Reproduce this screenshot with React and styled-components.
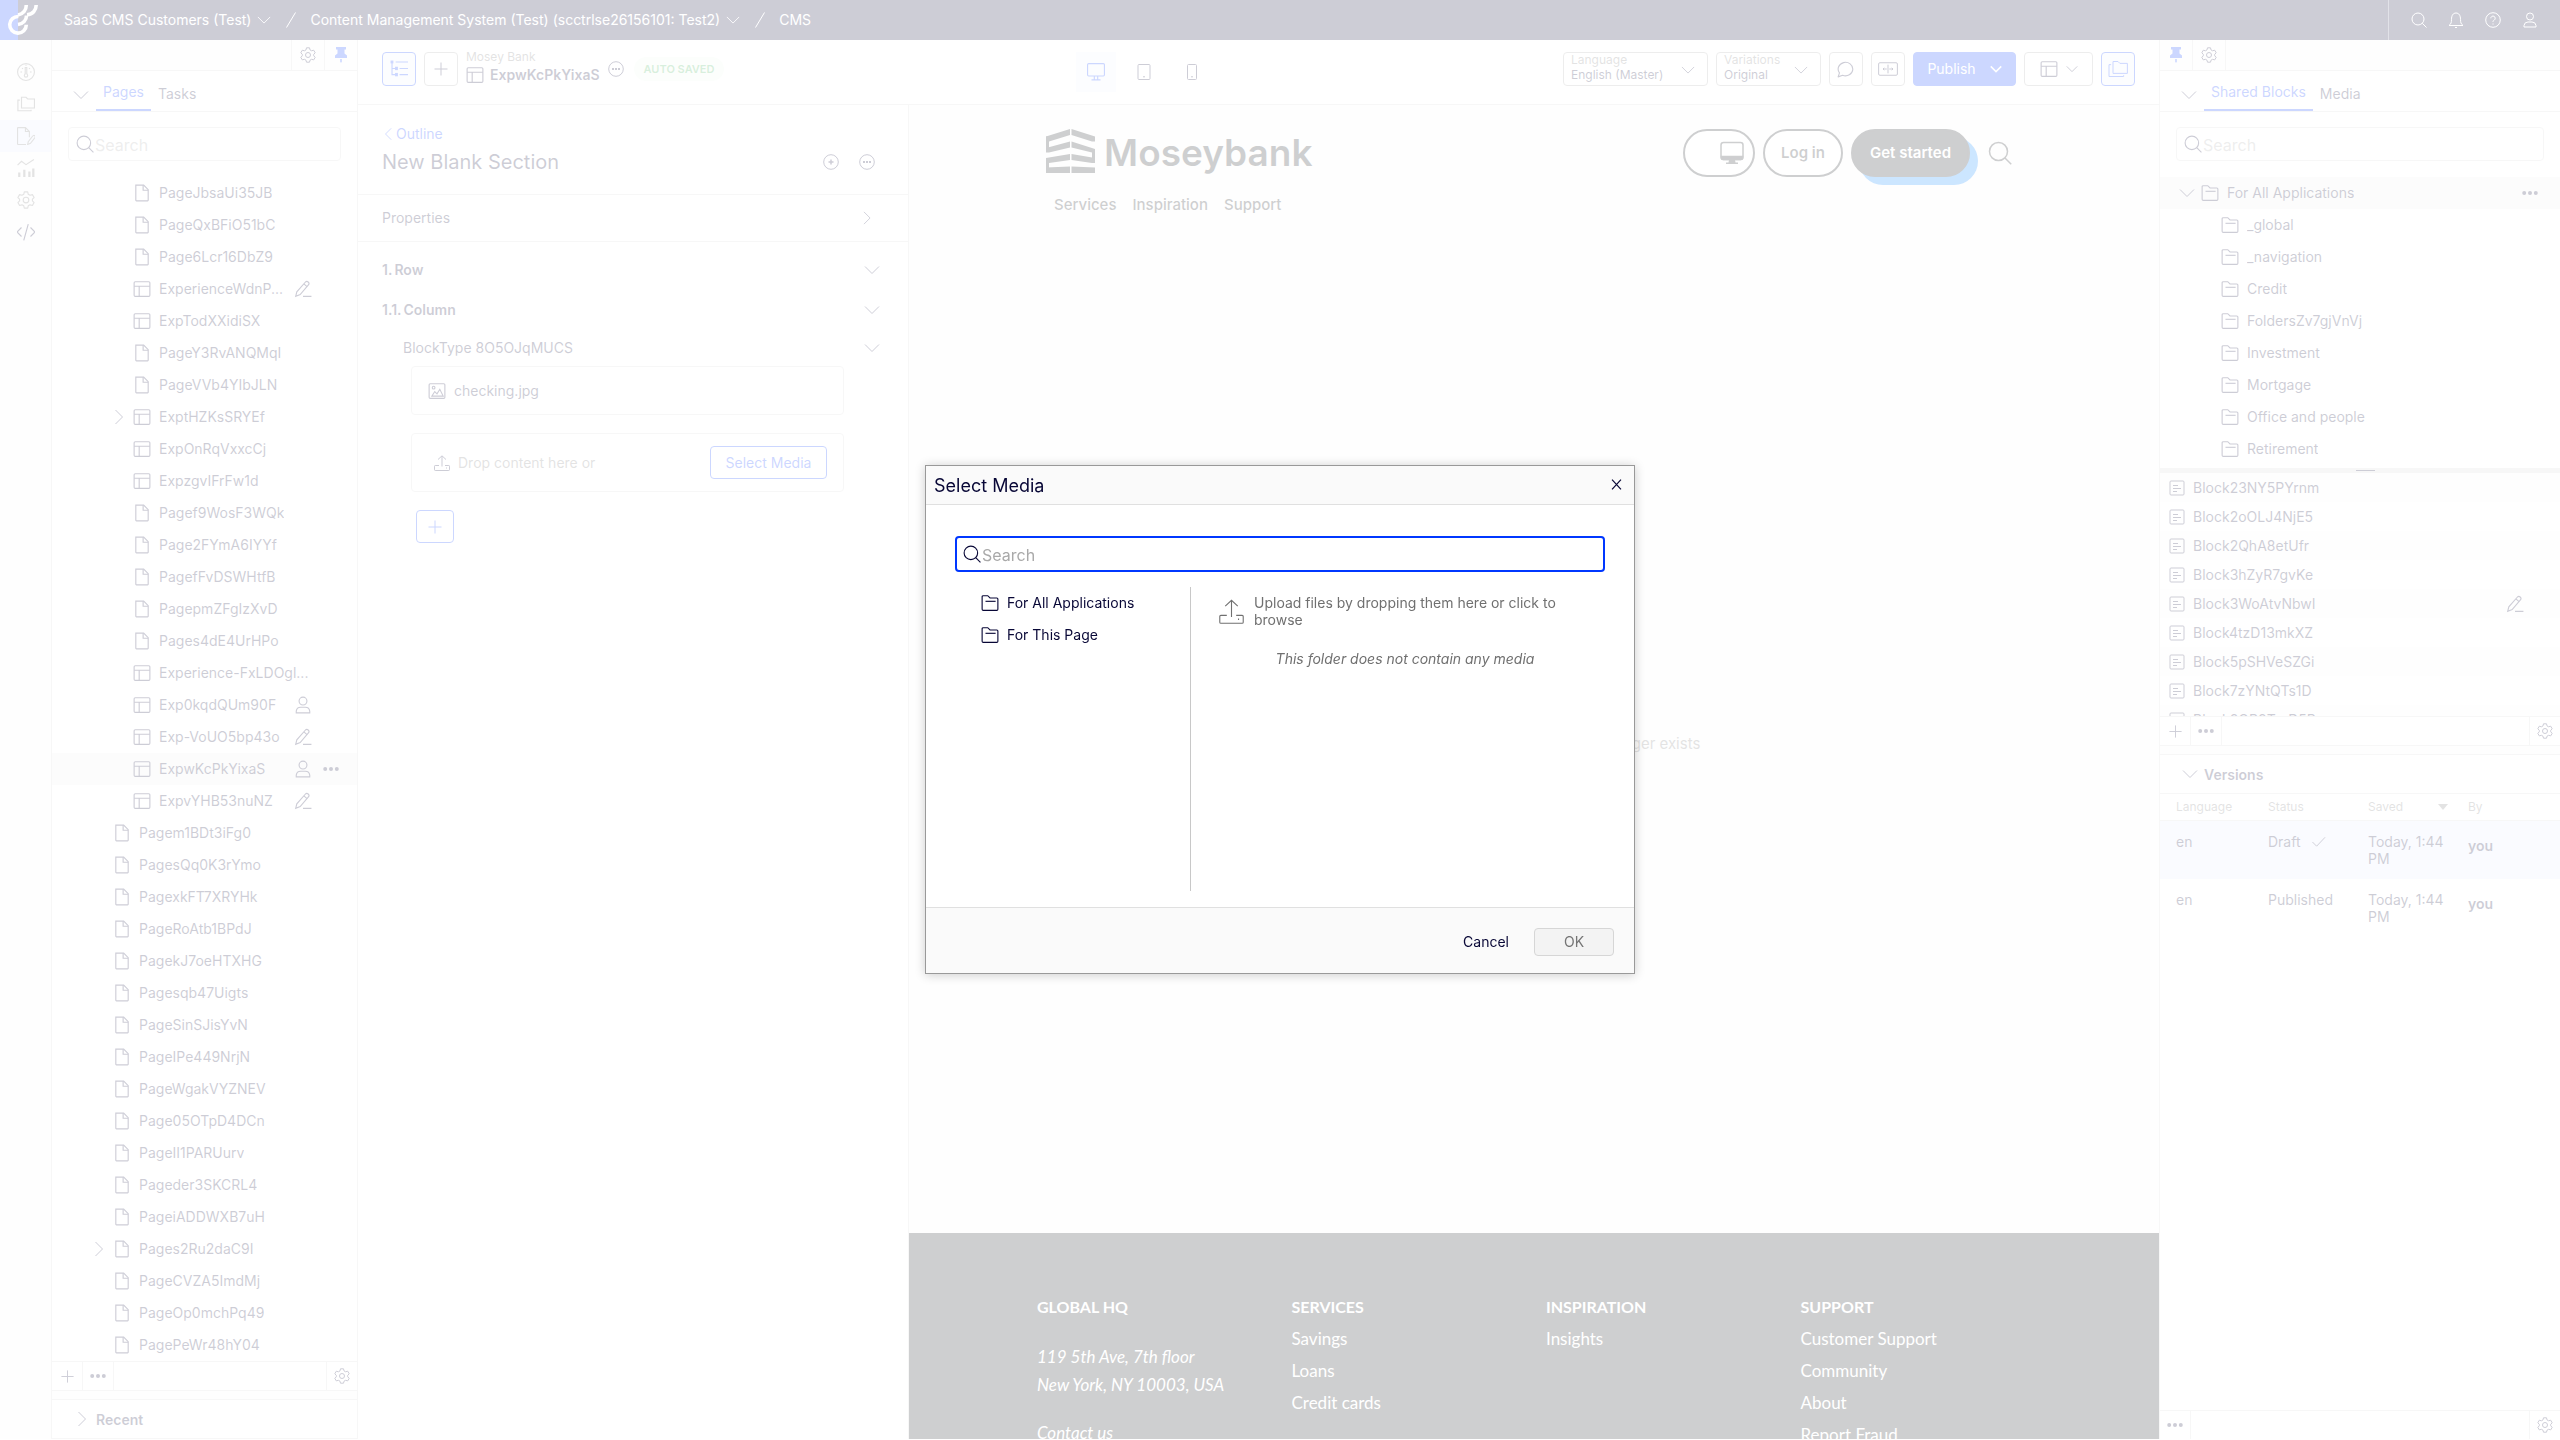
import React from 'react';
import styled, { createGlobalStyle, css } from 'styled-components';

const navy = '#080736';
const blue = '#0037ff';
const grey = '#757575';
const line = '#d6d6d6';
const edge = '#a6a6a6';
const ink = '#0b0f14';

const Global = createGlobalStyle`
  * { box-sizing: border-box; }
  html, body { margin: 0; height: 100%; overflow: hidden; }
  body { font-family: Inter, "Liberation Sans", sans-serif; font-size: 14px; line-height: 16px; color: ${navy}; background: #fff; }
  button, input, select { font: inherit; color: inherit; margin: 0; }
  button { padding: 0; border: 0; background: none; display: inline-flex; align-items: center; justify-content: center; }
  a { color: inherit; text-decoration: none; }
  ul { list-style: none; margin: 0; padding: 0; }
  h1, h2, h3, p { margin: 0; font-size: inherit; font-weight: inherit; }
`;

/* ---------- icons ---------- */
const shapes = {
  down: <path d="M1 4.500l7 7 7-7" />,
  right: <path d="M4.500 1l7 7-7 7" />,
  left: <path d="M10.500 1.500L4 8l6.500 6.500" />,
  page: <><path d="M2.500 1h7l4 4v9.500a.5.5 0 0 1-.5.5H3a.5.5 0 0 1-.5-.5z" /><path d="M9 1v4.500h4.500" /></>,
  layout: <><rect x="1" y="1.500" width="14" height="13" rx="1" /><path d="M1 5.500h14M5.500 5.500v9" /></>,
  folder: <><path d="M1 13.500v-11a1 1 0 0 1 1-1h4l2 2h6a1 1 0 0 1 1 1v9a1 1 0 0 1-1 1H2a1 1 0 0 1-1-1z" /><path d="M4 6.500h9" /></>,
  folders: <><path d="M4 11V2h4l1.500 1.500H15.500V11.500H4z" /><path d="M2.500 4.500H.8V14H12.500v-1" /></>,
  pencil: <><path d="M1.500 14.500l1-4 7.500-8.500a1.800 1.800 0 0 1 2.800 2.400L5.500 13z" /><path d="M8.800 3.500l2.800 2.400M8 14.500h7.500" /></>,
  person: <><circle cx="8" cy="4.500" r="3.500" /><path d="M2 15v-1.500a4 4 0 0 1 4-3.500h4a4 4 0 0 1 4 3.500V15z" /></>,
  dots: <g fill="currentColor" stroke="none"><circle cx="2.200" cy="8" r="2" /><circle cx="8" cy="8" r="2" /><circle cx="13.800" cy="8" r="2" /></g>,
  plus: <path d="M8 1.500v13M1.500 8h13" />,
  search: <><circle cx="7" cy="7" r="6" /><path d="M11.300 11.300L15.500 15.500" /></>,
  gear: <><path d="M6.500.8h3l.5 2.100 1.600.9 2.100-.6 1.500 2.600-1.500 1.500v1.500l1.500 1.500-1.500 2.600-2.100-.6-1.600.9-.5 2h-3l-.5-2-1.600-.9-2.100.6-1.500-2.600 1.500-1.500V7.300L.8 5.800l1.500-2.600 2.100.6L6 2.900z" strokeLinejoin="round" /><circle cx="8" cy="8" r="2.500" /></>,
  pin: <g fill="currentColor" stroke="none"><path d="M3 0h10v2.500h-1.500v4L14 8.500V11H2V8.500l2.500-2v-4H3z" /><path d="M7.200 12h1.600v2.500L8 16l-.8-1.500z" /></g>,
  gauge: <><circle cx="8" cy="8" r="7.500" /><circle cx="8" cy="11" r="1.500" /><path d="M7.300 9.500V4h1.400v5.500M3 8h1.500M11.500 8H13M4.500 4.500l.8.8M11.500 4.500l-.8.8M8 1.500v1" /></>,
  edit: <><path d="M8 15.500H1a.5.5 0 0 1-.5-.5V1A.5.5 0 0 1 1 .5h6.500L11 4v5" /><path d="M7.500.5V4H11M9.500 15.500l.5-2.500 4-5a1 1 0 0 1 2 1.500l-4 5z" /></>,
  chart: <><path d="M.5 5.500L4 2l4 3L15 .5" /><path d="M2 16v-4M6.500 16V9.500M11 16v-5M14.500 16V8.500" strokeWidth="2" /></>,
  code: <path d="M4 4L0 8l4 4M12 4l4 4-4 4M10 1L6 15.500" />,
  bell: <path d="M1 13.500h14c-2-1.500-2.500-3-2.500-6C12.500 3.500 11 1 8 1S3.500 3.500 3.500 7.500c0 3-.5 4.500-2.500 6zM7 15.500h2" />,
  help: <><circle cx="8" cy="8" r="7.300" /><path d="M5.800 6.300a2.200 2.200 0 1 1 3.400 1.800C8.300 8.600 8 9 8 10M8 11.500v1" /></>,
  tree: <><g fill="currentColor"><rect x="1" y="1" width="1.500" height="1.500" /><rect x="5" y="6.500" width="1.500" height="2" /><rect x="5" y="12" width="1.500" height="2" /></g><path d="M1.800 2v11H5M1.800 7.500H5M5 1.800h11M8.500 7.500H16M8.500 13H16" /></>,
  more: <><circle cx="8" cy="8" r="7.300" /><g fill="currentColor" stroke="none"><rect x="4" y="7" width="2" height="2" /><rect x="7" y="7" width="2" height="2" /><rect x="10" y="7" width="2" height="2" /></g></>,
  add: <><circle cx="8" cy="8" r="7.300" /><path d="M8 5.500v5M5.500 8h5" strokeWidth="1.500" /></>,
  desktop: <><rect x=".5" y=".5" width="15" height="11" rx="1" /><path d="M6.500 11.500v3M9.500 11.500v3M4 15h8" /></>,
  tablet: <><rect x="2" y=".5" width="12" height="15" rx="1" /><path d="M7 12.800h2" /></>,
  phone: <><rect x="3.500" y=".5" width="9" height="15" rx="1" /><path d="M7 12.800h2" /></>,
  comment: <path d="M1 15l1.200-3.500A6.500 6 0 1 1 5 13.600z" strokeLinejoin="round" />,
  compare: <><rect x=".5" y="3" width="15" height="10" rx="1" /><path d="M8 4.500v7M4 8h3M9 8h3M5 7L4 8l1 1M11 7l1 1-1 1" /></>,
  image: <><rect x="1" y="1.500" width="14" height="13" rx="1" /><circle cx="5" cy="5" r="1.200" /><path d="M3.500 12.500l2.500-4 2 2 2.500-4 3 6z" /></>,
  upload: <><path d="M8 11.500V1M4 4.500L8 .8l4 3.700" /><path d="M5 10.500H1.200a.7.7 0 0 0-.7.7v3.600c0 .4.3.7.7.7h13.600c.4 0 .7-.3.7-.7v-3.600a.7.7 0 0 0-.7-.7H11M12.500 12.500v1" /></>,
  block: <><rect x="1" y="1" width="14" height="14" rx="1" /><path d="M4 5.500h5M4 8.500h8M4 11.500h4" /></>,
  check: <path d="M1.500 8.500L6 13l9-9.500" />,
  close: <path d="M2.500 2l11 12M13.500 2l-11 12" />,
};

function Icon({ name, size = 16, weight = 1 }) {
  return (
    <svg width={size} height={size} viewBox="0 0 16 16" fill="none" stroke="currentColor" strokeWidth={weight} aria-hidden="true">
      {shapes[name]}
    </svg>
  );
}

/* ---------- shell ---------- */
const Shell = styled.div`
  height: 100vh; display: grid; grid-template-rows: 40px minmax(0, 1fr); padding-bottom: 1px;
`;
const TopBar = styled.header`
  display: flex; align-items: stretch; background: ${navy}; color: #fff;
`;
const Brand = styled.a`display: flex; width: 64px;`;
const Crumbs = styled.nav`
  display: flex; align-items: center; flex: 1;
`;
const Crumb = styled.button`gap: 6px; height: 40px;`;
const Slash = styled.span`
  display: flex; width: 39px; justify-content: center;
`;
const TopTools = styled.div`
  display: flex; align-items: center; gap: 21px; padding: 0 22px; border-left: 1px solid #6f6e8b;
`;
const Body = styled.div`
  display: grid; grid-template-columns: 52px 305px minmax(0, 1fr) 401px; min-height: 0;
`;
const Rail = styled.nav`
  padding-top: 16px; background: #f8f8f8; border-right: 1px solid ${line}; color: ${grey};
`;
const RailLink = styled.a`
  display: flex; height: 32px; align-items: center; justify-content: center;
  background: ${p => (p.$on ? '#e6ebff' : 'none')};
  color: ${p => (p.$dark ? navy : 'inherit')};
`;
const Side = styled.aside`
  display: flex; flex-direction: column; min-height: 0; background: #fff;
`;
const RightSide = styled(Side)`border-left: 1px solid ${line};`;
const PinBar = styled.div`
  display: flex; height: 31px; border-bottom: 1px solid ${line}; background: #fafafa;
  justify-content: ${p => (p.$end ? 'flex-end' : 'flex-start')};
`;
const PinButton = styled.button`
  width: 33px; color: ${p => (p.$on ? blue : navy)};
  border-${p => p.$side}: 1px solid ${line};
`;
const Tabs = styled.div`
  display: flex; height: 41px; padding-left: 14px; border-bottom: 1px solid ${line};
`;
const Fold = styled.button`width: 30px; padding-top: 8px;`;
const Tab = styled.button`
  height: 40px; padding: 6px 7px 0;
  ${p => p.$on && css`color: ${blue}; border-bottom: 2px solid ${blue}; padding-top: 4px;`}
`;
const SearchBox = styled.label`
  display: flex; align-items: center; height: 34px; padding: 0 7px; gap: 1px;
  border: 1px solid ${line}; border-radius: 4px; margin: 15px 16px 16px; background: #fff;
`;
const SearchInput = styled.input`
  flex: 1; min-width: 0; border: 0; outline: 0; padding: 2px 0 0; background: none; font-size: 16px; line-height: 20px;
  &::placeholder { color: #a9a9a9; opacity: 1; }
`;
const Tree = styled.ul`
  flex: ${p => (p.$grow ? '1 1 0' : 'none')}; min-height: 0; overflow: hidden;
`;
const TreeRow = styled.li`
  display: flex; align-items: center; height: 32px; padding-left: ${p => p.$pad}px;
  background: ${p => (p.$on ? '#f0f0f0' : 'none')};
`;
const Twist = styled.span`display: flex; width: 20px; justify-content: center; margin-right: 4px;`;
const TreeLink = styled.a`
  display: flex; flex: 1; min-width: 0; align-items: center; gap: 8px;
  svg { flex: none; }
  span { overflow: hidden; white-space: nowrap; text-overflow: ellipsis; line-height: 18px; }
`;
const Status = styled.span`display: flex; width: 20px; margin-left: 9px; justify-content: center;`;
const RowMenu = styled.button`width: 36px; margin-right: ${p => p.$gap || 8}px;`;
const ToolStrip = styled.div`
  display: flex; height: ${p => p.$h}px; border-top: 1px solid ${line};
  border-bottom: ${p => (p.$last ? '0' : `1px solid ${line}`)};
`;
const StripButton = styled.button`
  width: 31px; border-right: 1px solid ${line};
  &:last-child { margin-left: auto; border-right: 0; border-left: 1px solid ${line}; }
`;
const Gap = styled.div`height: 8px; background: #fafafa;`;
const SectionHead = styled.h2`
  display: flex; align-items: center; gap: 6px; height: 40px; padding-left: 22px; font-weight: 600; line-height: 17px;
  border-top: 1px solid ${line}; border-bottom: 1px solid ${line};
`;

/* ---------- main ---------- */
const Main = styled.main`
  display: grid; grid-template-rows: 65px minmax(0, 1fr); min-height: 0; border-left: 1px solid ${line};
`;
const Toolbar = styled.div`
  display: flex; justify-content: space-between; padding: 12px 24px 0; border-bottom: 1px solid ${line};
`;
const Group = styled.div`
  display: flex; gap: 8px; height: 34px; align-items: center;
`;
const Tool = styled.button`
  width: ${p => p.$w || 34}px; height: 34px; gap: 8px; border: 1px solid ${p => (p.$on ? blue : edge)}; border-radius: 4px;
  background: ${p => (p.$on ? '#f0f4ff' : '#fff')}; color: ${p => (p.$on ? blue : navy)};
`;
const Publish = styled(Tool)`background: ${blue}; border-color: ${blue}; color: #fff; gap: 14px; line-height: 18px;`;
const DocTitle = styled.div`
  display: flex; flex-direction: column; gap: 1px; padding-bottom: 3px;
  small { font-size: 12px; line-height: 14px; color: ${grey}; }
  strong { display: flex; gap: 6px; align-items: center; font-weight: 600; line-height: 20px; }
`;
const Saved = styled.span`
  padding: 0 10px; margin-left: 2px; height: 24px; border-radius: 12px; background: #effbef; color: #3fae55;
  font-size: 11px; font-weight: 600; line-height: 24px;
`;
const Devices = styled.div`display: flex; gap: 8px;`;
const Device = styled.button`
  width: 40px; height: 40px; color: ${p => (p.$on ? blue : navy)}; background: ${p => (p.$on ? '#f0f4ff' : 'none')};
`;
const Picker = styled.label`
  display: grid; grid-template-columns: 1fr 16px; align-content: start; width: ${p => p.$w}px; height: 34px; padding: 0 10px 0 7px;
  border: 1px solid ${edge}; border-radius: 4px; font-size: 12px; line-height: 14px;
  svg { grid-column: 2; grid-row: 1 / 3; align-self: center; margin-top: 4px; }
`;
const PickerLabel = styled.span`color: ${grey};`;
const PickerSelect = styled.select`
  grid-column: 1; appearance: none; border: 0; padding: 0; background: none; outline: 0; height: 16px;
`;
const Work = styled.div`
  display: grid; grid-template-columns: 551px minmax(0, 1fr); min-height: 0;
`;
const Outline = styled.section`border-right: 1px solid ${line};`;
const OutlineHead = styled.div`
  padding: 21px 24px 0; height: 90px; border-bottom: 1px solid ${line};
`;
const Back = styled.a`display: flex; align-items: center; color: ${blue};`;
const HeadRow = styled.div`
  display: flex; align-items: center; gap: 20px; padding: 8px 9px 0 0;
  h1 { flex: 1; font-size: 20px; line-height: 24px; }
`;
const Item = styled.button`
  display: flex; width: 100%; height: ${p => p.$h}px; justify-content: space-between;
  padding: 0 ${p => p.$r || 28}px 0 ${p => p.$l || 24}px; font-weight: ${p => (p.$bold ? 600 : 400)};
  border-bottom: ${p => (p.$rule ? `1px solid ${line}` : '0')};
`;
const Numbered = styled.span`display: flex; gap: 2px;`;
const Items = styled.div`padding-top: 8px;`;
const Card = styled.div`
  display: flex; align-items: center; gap: 8px; height: ${p => p.$h}px; margin: 0 64px 18px 53px;
  padding: 0 16px 0 ${p => (p.$hint ? 22 : 16)}px;
  border: 1px solid ${line}; border-radius: 4px;
  span { flex: 1; color: ${p => (p.$hint ? grey : 'inherit')}; }
`;
const Ghost = styled.button`
  width: ${p => p.$w}px; height: 33px; border: 1px solid ${blue}; border-radius: 4px; color: ${blue};
`;
const AddWrap = styled.div`padding-left: 58px;`;

/* ---------- site preview ---------- */
const Site = styled.section`
  display: flex; flex-direction: column; min-height: 0; overflow: hidden; background: #f8f8f8;
  font-size: 15px; color: ${ink};
`;
const SiteHead = styled.div`
  display: flex; justify-content: space-between; align-items: flex-start; padding: 24px 147px 0 137px;
`;
const Logo = styled.a`
  display: flex; align-items: flex-end; gap: 9px; height: 44px; font-size: 37px; font-weight: 600; line-height: 40px;
`;
const SiteActions = styled.div`display: flex; align-items: center; gap: 8px;`;
const Pill = styled.button`
  width: ${p => p.$w}px; height: 48px; border: 2px solid ${ink}; border-radius: 24px; background: ${p => (p.$solid ? ink : '#fff')};
  color: ${p => (p.$solid ? '#fff' : ink)}; font-weight: 600;
  justify-content: ${p => (p.$end ? 'flex-end' : 'center')}; padding-right: ${p => (p.$end ? 9 : 0)}px;
  box-shadow: ${p => (p.$solid ? '8px 8px 0 #0080ff' : 'none')};
`;
const SiteSearch = styled.button`margin-left: 10px;`;
const SiteNav = styled.nav`
  display: flex; gap: 16px; padding: 18px 0 0 145px; font-weight: 500; line-height: 20px;
`;
const Missing = styled.p`
  flex: 1; display: flex; align-items: center; justify-content: center; color: ${grey}; padding-top: 40px;
`;
const SiteFoot = styled.footer`
  display: grid; grid-template-columns: repeat(4, 1fr); height: 206px; flex: none; padding: 58px 104px 0 128px;
  background: ${ink}; color: #fff; overflow: hidden; font-family: Lato, "Open Sans", sans-serif; font-size: 17px; line-height: 32px;
  h3 { font-size: 16px; font-weight: 700; text-transform: uppercase; }
`;
const Address = styled.address`
  padding-top: 20px; line-height: 28px;
  p + a { display: block; margin-top: 20px; }
`;

/* ---------- right panel ---------- */
const Splitter = styled.div`
  display: flex; justify-content: center; height: 5px; margin-top: 3px; padding: 2px 0 0 10px; background: #d6d6d6;
  &::before { content: ""; width: 19px; height: 1px; background: ${navy}; }
`;
const Blocks = styled.ul`height: 243px; overflow: hidden;`;
const BlockRow = styled.li`
  display: flex; align-items: center; height: 29px; padding: 0 36px 0 9px; justify-content: space-between; line-height: 17px;
  background: ${p => (p.$alt ? '#fafafa' : 'none')};
  a { display: flex; align-items: center; gap: 8px; }
`;
const Versions = styled.table`
  width: 100%; border-collapse: collapse; table-layout: fixed; line-height: 17px;
  th { height: 26px; padding: 0 0 0 16px; text-align: left; font-size: 12px; font-weight: 400; color: ${grey}; border-bottom: 1px solid ${line}; }
  td { height: 59px; padding: 12px 0 0 16px; vertical-align: top; }
  th + th, td + td { padding-left: 8px; }
  td:last-child { font-weight: 600; padding-top: 16px; }
  tr.current td { background: #e6ebff; }
`;
const WithMark = styled.span`
  display: flex; gap: 10px; align-items: center; justify-content: ${p => (p.$spread ? 'space-between' : 'flex-start')};
  padding-right: ${p => (p.$spread ? 12 : 0)}px;
`;
const Caret = styled.span`border: 5px solid transparent; border-top: 6px solid ${grey}; border-bottom: 0;`;
const Spacer = styled.div`flex: 1;`;

/* ---------- dialog ---------- */
const Scrim = styled.div`
  position: fixed; inset: 0; display: flex; align-items: center; justify-content: center; padding-bottom: 1px;
  background: rgba(255, 255, 255, 0.8);
`;
const Dialog = styled.div`
  width: 710px; border: 1px solid #999; background: #fff; box-shadow: 0 1px 10px rgba(0, 0, 0, 0.2);
`;
const DialogHead = styled.div`
  display: flex; align-items: center; justify-content: space-between; height: 39px; padding: 2px 11px 0 8px;
  background: #fafafa; border-bottom: 1px solid #e0e0e0;
  h2 { font-size: 18px; line-height: 22px; }
`;
const Close = styled.button`align-self: flex-start; height: 32px;`;
const DialogSearch = styled(SearchBox)`
  height: 36px; margin: 31px 29px 15px; border: 2px solid ${blue}; padding: 0 6px;
`;
const DialogBody = styled.div`
  display: grid; grid-template-columns: 236px 1fr; height: 304px; margin: 0 29px 16px;
  > ul { border-right: 1px solid #c8c8c8; }
`;
const MediaPane = styled.div`
  padding: 7px 14px 0 28px; color: #707070; line-height: 17px;
  > p { margin-top: 22px; text-align: center; font-style: italic; }
`;
const Drop = styled.button`
  display: flex; width: 100%; gap: 10px; align-items: center; justify-content: flex-start; text-align: left;
  svg { flex: none; }
`;
const DialogFoot = styled.div`
  display: flex; align-items: center; justify-content: flex-end; height: 66px; padding: 3px 20px 0 0; gap: 25px;
  border-top: 1px solid #e0e0e0; background: #fafafa;
`;
const Ok = styled.button`
  width: 80px; height: 28px; border: 1px solid #d6d6d6; border-radius: 4px; background: #f3f3f3; color: #757575;
`;

/* ---------- data ---------- */
const pages = [
  ['PageJbsaUi35JB'], ['PageQxBFiO51bC'], ['Page6Lcr16DbZ9'], ['ExperienceWdnP...', 'pencil'], ['ExpTodXXidiSX'],
  ['PageY3RvANQMqI'], ['PageVVb4YIbJLN'], ['ExptHZKsSRYEf', null, true], ['ExpOnRqVxxcCj'], ['ExpzgvIFrFw1d'],
  ['Pagef9WosF3WQk'], ['Page2FYmA6IYYf'], ['PagefFvDSWHtfB'], ['PagepmZFgIzXvD'], ['Pages4dE4UrHPo'],
  ['Experience-FxLDOgl...'], ['Exp0kqdQUm90F', 'person'], ['Exp-VoUO5bp43o', 'pencil'],
  ['ExpwKcPkYixaS', 'person', false, true], ['ExpvYHB53nuNZ', 'pencil'],
].map(([name, status, fold, on]) => ({ name, status, fold, on, pad: 57 }));
const topPages = [
  'Pagem1BDt3iFg0', 'PagesQq0K3rYmo', 'PagexkFT7XRYHk', 'PageRoAtb1BPdJ', 'PagekJ7oeHTXHG', 'Pagesqb47Uigts',
  'PageSinSJisYvN', 'PageIPe449NrjN', 'PageWgakVYZNEV', 'Page05OTpD4DCn', 'PageII1PARUurv', 'Pageder3SKCRL4',
  'PageiADDWXB7uH', 'Pages2Ru2daC9I', 'PageCVZA5ImdMj', 'PageOp0mchPq49', 'PagePeWr48hY04',
].map(name => ({ name, pad: 37, fold: name === 'Pages2Ru2daC9I' }));
const folders = ['_global', '_navigation', 'Credit', 'FoldersZv7gjVnVj', 'Investment', 'Mortgage', 'Office and people', 'Retirement'];
const blocks = [
  'Block23NY5PYrnm', 'Block2oOLJ4NjE5', 'Block2QhA8etUfr', 'Block3hZyR7gvKe', 'Block3WoAtvNbwI',
  'Block4tzD13mkXZ', 'Block5pSHVeSZGi', 'Block7zYNtQTs1D', 'Block8OR8TvrD5R',
];
const rail = ['gauge', 'folders', 'edit', 'chart', 'gear', 'code'];
const siteLinks = [
  ['Services', ['Savings', 'Loans', 'Credit cards']],
  ['Inspiration', ['Insights']],
  ['Support', ['Customer Support', 'Community', 'About', 'Report Fraud']],
];

function Search({ Box = SearchBox, label, size = 18 }) {
  return (
    <Box>
      <Icon name="search" size={size} />
      <SearchInput type="text" placeholder="Search" aria-label={label} />
    </Box>
  );
}

function TreeItem({ name, icon, pad, fold, open, on, status, menu, gap }) {
  return (
    <TreeRow $pad={pad} $on={on}>
      <Twist>{fold && <Icon name={open ? 'down' : 'right'} />}</Twist>
      <TreeLink href="#"><Icon name={icon} size={18} /><span>{name}</span></TreeLink>
      {status && <Status><Icon name={status} size={18} /></Status>}
      {(status || menu) && <RowMenu $gap={gap} aria-label={`Menu for ${name}`}>{on && <Icon name="dots" />}</RowMenu>}
    </TreeRow>
  );
}

function Strip({ height, plus = true, last }) {
  return (
    <ToolStrip $h={height} $last={last}>
      {plus && <StripButton aria-label="Add"><Icon name="plus" size={15} /></StripButton>}
      <StripButton aria-label="More"><Icon name="dots" /></StripButton>
      <StripButton aria-label="Settings"><Icon name="gear" /></StripButton>
    </ToolStrip>
  );
}

function Divider() {
  return (
    <Slash>
      <svg width="10" height="16" stroke="currentColor" aria-hidden="true"><path d="M.5 15.500l9-15" /></svg>
    </Slash>
  );
}

function BrandMark() {
  return (
    <svg width="40" height="40" viewBox="0 0 40 40" fill="none" stroke="#fff" strokeWidth="3.600" aria-hidden="true">
      <rect width="18" height="40" fill={blue} stroke="none" />
      <path d="M18.500 16.500a8.300 8.300 0 1 0 7.800 8.300" />
      <path d="M26.300 5c0 5.200-3.300 9-8.300 10" />
      <path d="M36.200 5c0 5.200-3.600 9.400-9.200 9.800" />
      <path d="M26.500 15.500c0 4.800-3.500 8.300-8.500 9" />
    </svg>
  );
}

function BankMark() {
  return (
    <svg width="49" height="44" viewBox="0 0 49 44" fill={ink} aria-hidden="true">
      <path d="M0 7.500L24 0v6L3 12.500H0zM49 7.500L25.500 0v6L46 12.500h3z" />
      <path d="M0 19L24 12.500v6L3 23.500H0zM49 20L25.500 12.500v6L46 23.500h3z" />
      <path d="M0 29L24 25v6L3 34H0zM49 29L25.500 25v6L46 34h3z" />
      <path d="M0 38.500l24-1V44H0zM49 38.500l-23.500-1V44H49z" />
      <path d="M0 7.500h3v12H0zM0 29h3v12H0zM46 20h3v12h-3z" />
    </svg>
  );
}

function SiteDesktop() {
  return (
    <svg width="24" height="24" viewBox="0 0 24 24" fill="none" stroke={ink} strokeWidth="1.500" aria-hidden="true">
      <rect x="1" y="1.500" width="22" height="17" rx="2.500" />
      <path d="M1.500 15.500h21V17a1.500 1.500 0 0 1-1.500 1.500H3A1.500 1.500 0 0 1 1.500 17z" fill={ink} />
      <path d="M9 19h6l.5 2.500H18v1.500H6v-1.500h2.500z" fill={ink} stroke="none" />
    </svg>
  );
}

export default function App() {
  return (
    <>
      <Global />
      <Shell>
        <TopBar>
          <Brand href="#" aria-label="Home"><BrandMark /></Brand>
          <Crumbs aria-label="Breadcrumb">
            <Crumb>SaaS CMS Customers (Test)<Icon name="down" size={14} /></Crumb>
            <Divider />
            <Crumb>Content Management System (Test) (scctrlse26156101: Test2)<Icon name="down" size={14} /></Crumb>
            <Divider />
            <a href="#">CMS</a>
          </Crumbs>
          <TopTools>
            {['search', 'bell', 'help', 'person'].map(n => <button key={n} aria-label={n}><Icon name={n} /></button>)}
          </TopTools>
        </TopBar>

        <Body>
          <Rail aria-label="Main">
            {rail.map(n => <RailLink key={n} href="#" aria-label={n} $on={n === 'edit'} $dark={n === 'code'}><Icon name={n} size={18} /></RailLink>)}
          </Rail>

          <Side>
            <PinBar $end>
              <PinButton $side="left" aria-label="Settings"><Icon name="gear" /></PinButton>
              <PinButton $side="left" $on aria-label="Unpin"><Icon name="pin" /></PinButton>
            </PinBar>
            <Tabs>
              <Fold aria-label="Collapse"><Icon name="down" /></Fold>
              <Tab $on>Pages</Tab>
              <Tab>Tasks</Tab>
            </Tabs>
            <Search label="Search pages" />
            <Tree $grow>
              {[...pages, ...topPages].map(p => (
                <TreeItem key={p.name} {...p} icon={p.name.startsWith('Exp') ? 'layout' : 'page'} />
              ))}
            </Tree>
            <Strip height={30} />
            <Gap />
            <SectionHead><Icon name="right" />Recent</SectionHead>
          </Side>

          <Main>
            <Toolbar>
              <Group>
                <Tool $on aria-label="Outline"><Icon name="tree" size={18} /></Tool>
                <Tool aria-label="Add"><Icon name="plus" /></Tool>
                <DocTitle>
                  <small>Mosey Bank</small>
                  <strong><Icon name="layout" size={18} />ExpwKcPkYixaS</strong>
                </DocTitle>
                <button aria-label="Options"><Icon name="more" /></button>
                <Saved>AUTO SAVED</Saved>
              </Group>
              <Devices>
                <Device $on aria-label="Desktop"><Icon name="desktop" size={18} /></Device>
                <Device aria-label="Tablet"><Icon name="tablet" /></Device>
                <Device aria-label="Phone"><Icon name="phone" /></Device>
              </Devices>
              <Group>
                <Picker $w={145}>
                  <PickerLabel>Language</PickerLabel>
                  <PickerSelect><option>English (Master)</option></PickerSelect>
                  <Icon name="down" size={14} />
                </Picker>
                <Picker $w={105}>
                  <PickerLabel>Variations</PickerLabel>
                  <PickerSelect><option>Original</option></PickerSelect>
                  <Icon name="down" size={14} />
                </Picker>
                <Tool aria-label="Comments"><Icon name="comment" size={18} /></Tool>
                <Tool aria-label="Compare"><Icon name="compare" size={20} weight={0.8} /></Tool>
                <Publish $w={103}>Publish<Icon name="down" size={12} weight={2} /></Publish>
                <Tool $w={69} aria-label="View"><Icon name="layout" size={18} /><Icon name="down" size={12} weight={1.3} /></Tool>
                <Tool $on aria-label="Assets"><Icon name="folders" size={20} weight={0.8} /></Tool>
              </Group>
            </Toolbar>

            <Work>
              <Outline>
                <OutlineHead>
                  <Back href="#"><Icon name="left" size={14} />Outline</Back>
                  <HeadRow>
                    <h1>New Blank Section</h1>
                    <button aria-label="Add"><Icon name="add" /></button>
                    <button aria-label="More"><Icon name="more" /></button>
                  </HeadRow>
                </OutlineHead>
                <Item $h={47} $r={34} $rule>Properties<Icon name="right" size={14} /></Item>
                <Items>
                  <Item $h={40} $bold><Numbered><span>1.</span><span>Row</span></Numbered><Icon name="down" /></Item>
                  <Item $h={40} $bold><Numbered><span>1.1.</span><span>Column</span></Numbered><Icon name="down" /></Item>
                  <Item $h={36} $l={45}>BlockType 8O5OJqMUCS<Icon name="down" /></Item>
                </Items>
                <Card $h={49}><Icon name="image" size={18} /><span>checking.jpg</span></Card>
                <Card $h={59} $hint>
                  <Icon name="upload" /><span>Drop content here or</span><Ghost $w={117}>Select Media</Ghost>
                </Card>
                <AddWrap><Ghost $w={38} aria-label="Add content"><Icon name="plus" /></Ghost></AddWrap>
              </Outline>

              <Site>
                <SiteHead>
                  <Logo href="#"><BankMark />Moseybank</Logo>
                  <SiteActions>
                    <Pill $w={72} $end aria-label="Theme"><SiteDesktop /></Pill>
                    <Pill $w={80}>Log in</Pill>
                    <Pill $w={119} $solid>Get started</Pill>
                    <SiteSearch aria-label="Search"><Icon name="search" size={24} /></SiteSearch>
                  </SiteActions>
                </SiteHead>
                <SiteNav aria-label="Site">
                  <a href="#">Services</a><a href="#">Inspiration</a><a href="#">Support</a>
                </SiteNav>
                <Missing>The content you were opening no longer exists</Missing>
                <SiteFoot>
                  <div>
                    <h3>Global HQ</h3>
                    <Address><p>119 5th Ave, 7th floor<br />New York, NY 10003, USA</p><a href="#">Contact us</a></Address>
                  </div>
                  {siteLinks.map(([head, links]) => (
                    <div key={head}>
                      <h3>{head}</h3>
                      <ul>{links.map(l => <li key={l}><a href="#">{l}</a></li>)}</ul>
                    </div>
                  ))}
                </SiteFoot>
              </Site>
            </Work>
          </Main>

          <RightSide>
            <PinBar>
              <PinButton $side="right" $on aria-label="Unpin"><Icon name="pin" /></PinButton>
              <PinButton $side="right" aria-label="Settings"><Icon name="gear" /></PinButton>
            </PinBar>
            <Tabs>
              <Fold aria-label="Collapse"><Icon name="down" /></Fold>
              <Tab $on>Shared Blocks</Tab>
              <Tab>Media</Tab>
            </Tabs>
            <Search label="Search blocks" />
            <Tree>
              <TreeItem name="For All Applications" icon="folder" pad={17} fold open on menu gap={12} />
              {folders.map(n => <TreeItem key={n} name={n} icon="folder" pad={37} />)}
            </Tree>
            <Splitter />
            <Blocks>
              {blocks.map((n, i) => (
                <BlockRow key={n} $alt={i % 2 === 0}>
                  <a href="#"><Icon name="block" />{n}</a>
                  {i === 4 && <Icon name="pencil" size={18} />}
                </BlockRow>
              ))}
            </Blocks>
            <Strip height={30} />
            <Gap />
            <SectionHead><Icon name="down" />Versions</SectionHead>
            <Versions>
              <colgroup><col width="100" /><col width="100" /><col width="100" /><col /></colgroup>
              <thead>
                <tr><th>Language</th><th>Status</th><th><WithMark $spread>Saved<Caret /></WithMark></th><th>By</th></tr>
              </thead>
              <tbody>
                <tr className="current"><td>en</td><td><WithMark>Draft<Icon name="check" size={15} /></WithMark></td><td>Today, 1:44<br />PM</td><td>you</td></tr>
                <tr><td>en</td><td>Published</td><td>Today, 1:44<br />PM</td><td>you</td></tr>
              </tbody>
            </Versions>
            <Spacer />
            <Strip height={29} plus={false} last />
          </RightSide>
        </Body>
      </Shell>

      <Scrim>
        <Dialog role="dialog" aria-labelledby="dialog-title">
          <DialogHead>
            <h2 id="dialog-title">Select Media</h2>
            <Close aria-label="Close"><Icon name="close" size={13} weight={1.5} /></Close>
          </DialogHead>
          <Search Box={DialogSearch} label="Search media" />
          <DialogBody>
            <Tree>
              <TreeItem name="For All Applications" icon="folder" pad={2} />
              <TreeItem name="For This Page" icon="folder" pad={2} />
            </Tree>
            <MediaPane>
              <Drop><Icon name="upload" size={25} weight={0.7} />Upload files by dropping them here or click to browse</Drop>
              <p>This folder does not contain any media</p>
            </MediaPane>
          </DialogBody>
          <DialogFoot><button>Cancel</button><Ok disabled>OK</Ok></DialogFoot>
        </Dialog>
      </Scrim>
    </>
  );
}
